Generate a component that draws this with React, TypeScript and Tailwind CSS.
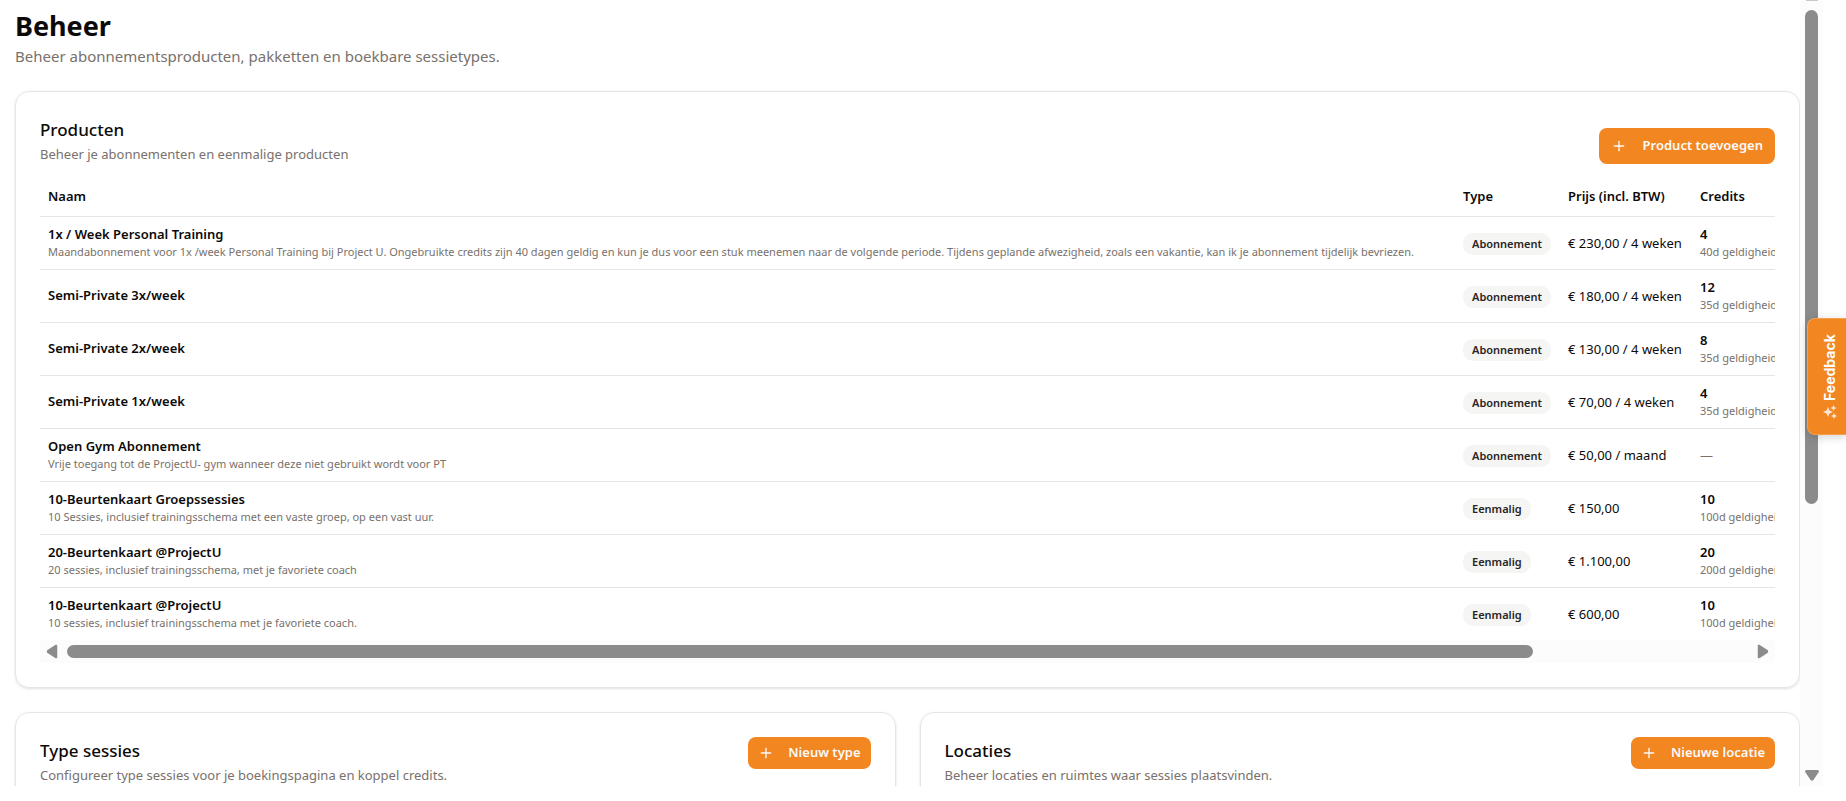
import { clsx } from "clsx"
import { Plus } from "lucide-react"

type Product = {
  name: string
  description?: string
  type: "Abonnement" | "Eenmalig"
  price: string
  credits?: number
  validity?: number
}

const products: Product[] = [
  {
    name: "1x / Week Personal Training",
    description:
      "Maandabonnement voor 1x /week Personal Training bij Project U. Ongebruikte credits zijn 40 dagen geldig en kun je dus voor een stuk meenemen naar de volgende periode. Tijdens geplande afwezigheid, zoals een vakantie, kan ik je abonnement tijdelijk bevriezen.",
    type: "Abonnement",
    price: "€ 230,00 / 4 weken",
    credits: 4,
    validity: 40,
  },
  { name: "Semi-Private 3x/week", type: "Abonnement", price: "€ 180,00 / 4 weken", credits: 12, validity: 35 },
  { name: "Semi-Private 2x/week", type: "Abonnement", price: "€ 130,00 / 4 weken", credits: 8, validity: 35 },
  { name: "Semi-Private 1x/week", type: "Abonnement", price: "€ 70,00 / 4 weken", credits: 4, validity: 35 },
  {
    name: "Open Gym Abonnement",
    description: "Vrije toegang tot de ProjectU- gym wanneer deze niet gebruikt wordt voor PT",
    type: "Abonnement",
    price: "€ 50,00 / maand",
  },
  {
    name: "10-Beurtenkaart Groepssessies",
    description: "10 Sessies, inclusief trainingsschema met een vaste groep, op een vast uur.",
    type: "Eenmalig",
    price: "€ 150,00",
    credits: 10,
    validity: 100,
  },
  {
    name: "20-Beurtenkaart @ProjectU",
    description: "20 sessies, inclusief trainingsschema, met je favoriete coach",
    type: "Eenmalig",
    price: "€ 1.100,00",
    credits: 20,
    validity: 200,
  },
  {
    name: "10-Beurtenkaart @ProjectU",
    description: "10 sessies, inclusief trainingsschema met je favoriete coach.",
    type: "Eenmalig",
    price: "€ 600,00",
    credits: 10,
    validity: 100,
  },
]

type AddButtonProps = {
  label: string
  small?: boolean
}

function AddButton({ label, small }: AddButtonProps) {
  return (
    <button
      type="button"
      className={clsx(
        "flex shrink-0 items-center rounded-lg bg-[#f28620] text-[13px] font-semibold whitespace-nowrap text-[#fafaf9]",
        small ? "h-8 gap-3.5 px-2.5" : "h-9 gap-4 px-3",
      )}
    >
      <Plus className="size-4" aria-hidden="true" />
      {label}
    </button>
  )
}

type CardHeadingProps = {
  title: string
  description: string
}

function CardHeading({ title, description }: CardHeadingProps) {
  return (
    <div>
      <h2 className="text-[17px] leading-7 font-medium">{title}</h2>
      <p className="text-[13px] leading-5 text-[#78716c]">{description}</p>
    </div>
  )
}

function ProductRow({ product }: { product: Product }) {
  return (
    <tr className="h-[53px] border-b border-[#e5e5e5] last:border-0">
      <td className="px-2 pb-px">
        <div className="text-[13px] leading-5 font-semibold">{product.name}</div>
        {product.description && (
          <div className="text-[11px] leading-4 text-[#78716c]">{product.description}</div>
        )}
      </td>
      <td className="px-2">
        <span className="inline-flex h-[22px] items-center rounded-[10px] bg-[#f5f5f4] px-[9px] text-[11px] font-semibold text-[#292524]">
          {product.type}
        </span>
      </td>
      <td className="px-2 text-[13px] leading-5">{product.price}</td>
      <td className="px-2 pb-px">
        {product.credits ? (
          <>
            <div className="text-[13px] leading-5 font-semibold">{product.credits}</div>
            <div className="text-[11px] leading-4 text-[#78716c]">{product.validity}d geldigheid</div>
          </>
        ) : (
          <span className="text-[13px] leading-5 text-[#78716c]">—</span>
        )}
      </td>
    </tr>
  )
}

function ProductTable() {
  return (
    <div className="overflow-hidden">
      <table className="w-[1990px] table-fixed text-left whitespace-nowrap">
        <colgroup>
          <col className="w-[1415px]" />
          <col className="w-[105px]" />
          <col className="w-[132px]" />
          <col />
        </colgroup>
        <thead>
          <tr className="h-10 border-b border-[#e5e5e5] text-[13px] leading-5">
            <th className="px-2 font-semibold">Naam</th>
            <th className="px-2 font-semibold">Type</th>
            <th className="px-2 font-semibold">Prijs (incl. BTW)</th>
            <th className="px-2 font-semibold">Credits</th>
          </tr>
        </thead>
        <tbody>
          {products.map((product) => (
            <ProductRow key={product.name} product={product} />
          ))}
        </tbody>
      </table>
    </div>
  )
}

function Arrow({ className }: { className?: string }) {
  return (
    <svg viewBox="0 0 14 11" className={clsx("h-[11px] w-3.5 shrink-0 fill-[#8b8b8b]", className)} aria-hidden="true">
      <path d="M1.6 0h10.8c1.3 0 2 1.3 1.2 2.3L8.4 10c-.7 1.1-2.100 1.100-2.800 0L.4 2.300C-.4 1.300.3 0 1.600 0Z" />
    </svg>
  )
}

function HorizontalScrollbar() {
  return (
    <div className="flex h-[23px] items-center bg-[#fcfcfc] px-[5px]">
      <Arrow className="rotate-90" />
      <div className="mx-2 flex-1">
        <div className="h-[13px] w-[87.2%] rounded-full bg-[#8b8b8b]" />
      </div>
      <Arrow className="-rotate-90" />
    </div>
  )
}

function VerticalScrollbar() {
  return (
    <div className="flex w-[23px] shrink-0 flex-col items-center bg-[#fcfcfc] pb-[5px]">
      <div className="h-px w-3 bg-[#c8c8c8]" />
      <div className="mt-[9px] w-[13px] flex-1">
        <div className="h-[65%] rounded-full bg-[#8b8b8b]" />
      </div>
      <Arrow />
    </div>
  )
}

function FeedbackButton() {
  return (
    <button
      type="button"
      className="absolute top-[318px] right-0 flex h-[117px] w-[39px] rotate-180 items-center justify-center gap-1 rounded-r-lg border border-l-0 border-[#f5a04f] bg-[#f28620] pr-1.5 font-[Inter,sans-serif] text-sm font-bold text-white shadow-[0_-2px_10px_rgba(0,0,0,0.18)] [writing-mode:vertical-rl]"
    >
      <svg viewBox="0 0 14 14" className="size-3.5 fill-white/80" aria-hidden="true">
        <path d="M9 2 10.500 5.500 14 7 10.500 8.500 9 12 7.500 8.500 4 7 7.500 5.500Z" />
        <path d="M3 0 3.900 2.100 6 3 3.900 3.900 3 6 2.100 3.900 0 3 2.100 2.100Z" />
        <path d="M3.500 8 4.400 10.100 6.500 11 4.400 11.900 3.500 14 2.600 11.900.5 11 2.600 10.100Z" />
      </svg>
      Feedback
    </button>
  )
}

export default function App() {
  return (
    <div className="relative h-screen overflow-hidden bg-white pr-[23px] pb-[15px] font-['Noto_Sans',sans-serif] text-[#0c0a09]">
      <div className="flex h-full">
        <main className="min-w-0 flex-1 overflow-hidden pt-2 pl-[15px]">
          <h1 className="text-[27px] leading-9 font-bold">Beheer</h1>
          <p className="text-[15px] leading-6 text-[#78716c]">
            Beheer abonnementsproducten, pakketten en boekbare sessietypes.
          </p>

          <section className="mt-[23px] rounded-[14px] border border-[#e5e5e5] p-6 shadow-sm">
            <div className="mb-3 flex items-end justify-between">
              <CardHeading title="Producten" description="Beheer je abonnementen en eenmalige producten" />
              <AddButton label="Product toevoegen" />
            </div>
            <ProductTable />
            <HorizontalScrollbar />
          </section>

          <div className="mt-6 grid grid-cols-2 gap-6">
            <section className="rounded-[14px] border border-[#e5e5e5] p-6 shadow-sm">
              <div className="flex items-start justify-between">
                <CardHeading
                  title="Type sessies"
                  description="Configureer type sessies voor je boekingspagina en koppel credits."
                />
                <AddButton label="Nieuw type" small />
              </div>
            </section>
            <section className="rounded-[14px] border border-[#e5e5e5] p-6 shadow-sm">
              <div className="flex items-start justify-between">
                <CardHeading title="Locaties" description="Beheer locaties en ruimtes waar sessies plaatsvinden." />
                <AddButton label="Nieuwe locatie" small />
              </div>
            </section>
          </div>
        </main>
        <VerticalScrollbar />
      </div>
      <FeedbackButton />
    </div>
  )
}
